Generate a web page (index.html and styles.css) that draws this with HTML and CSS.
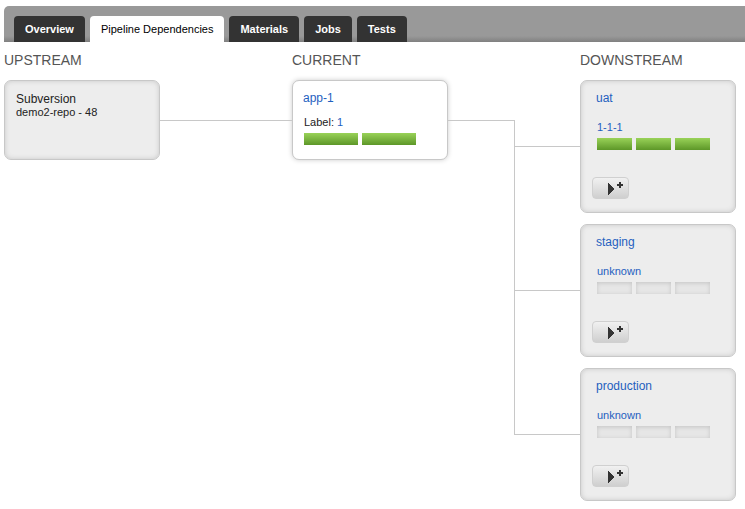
FILE: index.html
```
<!DOCTYPE html>
<html lang="en">
<head>
<meta charset="utf-8">
<title>Pipeline Dependencies</title>
<link rel="stylesheet" href="styles.css">
</head>
<body>
<nav class="tabs">
  <a class="tab" href="#overview">Overview</a>
  <a class="tab tab-active" href="#dependencies" aria-current="page">Pipeline Dependencies</a>
  <a class="tab" href="#materials">Materials</a>
  <a class="tab" href="#jobs">Jobs</a>
  <a class="tab" href="#tests">Tests</a>
</nav>
<main class="graph">
  <section class="column">
    <h2>UPSTREAM</h2>
    <article class="card material">
      <h3>Subversion</h3>
      <p>demo2-repo - 48</p>
    </article>
  </section>
  <div class="link"><div class="stub"></div></div>
  <section class="column">
    <h2>CURRENT</h2>
    <article class="card current">
      <h3><a href="#app-1">app-1</a></h3>
      <p class="label">Label: <a href="#label-1">1</a></p>
      <div class="stages"><span class="stage passed"></span><span class="stage passed"></span></div>
    </article>
  </section>
  <div class="link">
    <div class="stub"></div>
    <div class="branches">
      <div class="branch branch-first"></div>
      <div class="branch"></div>
      <div class="branch"></div>
    </div>
  </div>
  <section class="column">
    <h2>DOWNSTREAM</h2>
    <article class="card downstream">
      <h3><a href="#uat">uat</a></h3>
      <p class="label"><a href="#uat-1">1-1-1</a></p>
      <div class="stages"><span class="stage passed"></span><span class="stage passed"></span><span class="stage passed"></span></div>
      <button class="trigger" type="button" aria-label="Trigger uat"><svg width="16" height="14" viewBox="0 0 16 14" shape-rendering="crispEdges"><path d="M0 2v12l6-6z"/><path d="M11 1h2v2h2v2h-2v2h-2V5H9V3h2z"/></svg></button>
    </article>
    <article class="card downstream">
      <h3><a href="#staging">staging</a></h3>
      <p class="label"><a href="#staging-run">unknown</a></p>
      <div class="stages"><span class="stage"></span><span class="stage"></span><span class="stage"></span></div>
      <button class="trigger" type="button" aria-label="Trigger staging"><svg width="16" height="14" viewBox="0 0 16 14" shape-rendering="crispEdges"><path d="M0 2v12l6-6z"/><path d="M11 1h2v2h2v2h-2v2h-2V5H9V3h2z"/></svg></button>
    </article>
    <article class="card downstream">
      <h3><a href="#production">production</a></h3>
      <p class="label"><a href="#production-run">unknown</a></p>
      <div class="stages"><span class="stage"></span><span class="stage"></span><span class="stage"></span></div>
      <button class="trigger" type="button" aria-label="Trigger production"><svg width="16" height="14" viewBox="0 0 16 14" shape-rendering="crispEdges"><path d="M0 2v12l6-6z"/><path d="M11 1h2v2h2v2h-2v2h-2V5H9V3h2z"/></svg></button>
    </article>
  </section>
</main>
</body>
</html>
```
FILE: styles.css
```
* {
  box-sizing: border-box;
}

body {
  margin: 0;
  padding: 6px 0 8px 4px;
  background: #fff;
  color: #222;
  font: 11px/14px "Liberation Sans", Arial, sans-serif;
}

h2, h3, p {
  margin: 0;
  font-weight: normal;
}

a {
  color: #1f5fbf;
  text-decoration: none;
}

.tabs {
  display: flex;
  gap: 5px;
  padding: 10px 10px 0;
  border-top-left-radius: 5px;
  background: linear-gradient(to top, #808080, #999 6px);
}

.tab {
  padding: 6px 11px;
  border-radius: 4px 4px 0 0;
  background: #333;
  color: #fff;
  font-weight: bold;
}

.tab-active {
  background: #fff;
  color: #000;
  font-weight: normal;
}

.graph {
  display: grid;
  grid-template-columns: 156px 1fr 156px 1fr 156px;
  padding-right: 9px;
}

.column h2 {
  padding: 8px 0 10px;
  color: #555;
  font-size: 14px;
  line-height: 20px;
}

.card {
  min-height: 80px;
  padding: 11px;
  border: 1px solid #c8c8c8;
  border-radius: 7px;
  background: #ededed;
  box-shadow: inset 0 0 5px #c8c8c8;
}

.card + .card {
  margin-top: 11px;
}

.card h3 {
  font-size: 12px;
  line-height: 14px;
}

.material p {
  line-height: 12px;
}

.current {
  padding: 10px;
  background: #fff;
  box-shadow: 0 0 5px #ccc;
}

.current .label {
  margin-top: 10px;
}

.label {
  padding-left: 1px;
}

.stages {
  display: flex;
  gap: 4px;
  width: 113px;
  height: 12px;
  margin: 4px 0 0 1px;
}

.current .stages {
  width: 112px;
}

.stage {
  flex: 1;
  background: #e6e6e6;
  box-shadow: inset 0 1px 4px #c4c4c4;
}

.passed {
  background: linear-gradient(#99d258, #5d9728);
  box-shadow: none;
}

.downstream {
  padding: 10px 15px 13px;
}

.downstream .label {
  margin-top: 15px;
}

.trigger {
  display: flex;
  width: 37px;
  height: 22px;
  margin: 27px 0 0 -4px;
  padding: 3px 0 0 15px;
  border: 1px solid #d0d0d0;
  border-radius: 4px;
  background: linear-gradient(#f1f1f1, #cfcfcf);
  fill: #333;
}

.link {
  display: flex;
  padding-top: 78px;
}

.stub {
  flex: 1;
  height: 1px;
  background: #c8c8c8;
}

.branches {
  flex: 1;
}

.branch {
  height: 144px;
  border: solid #c8c8c8;
  border-width: 0 0 1px 1px;
}

.branch-first {
  height: 27px;
}
```
